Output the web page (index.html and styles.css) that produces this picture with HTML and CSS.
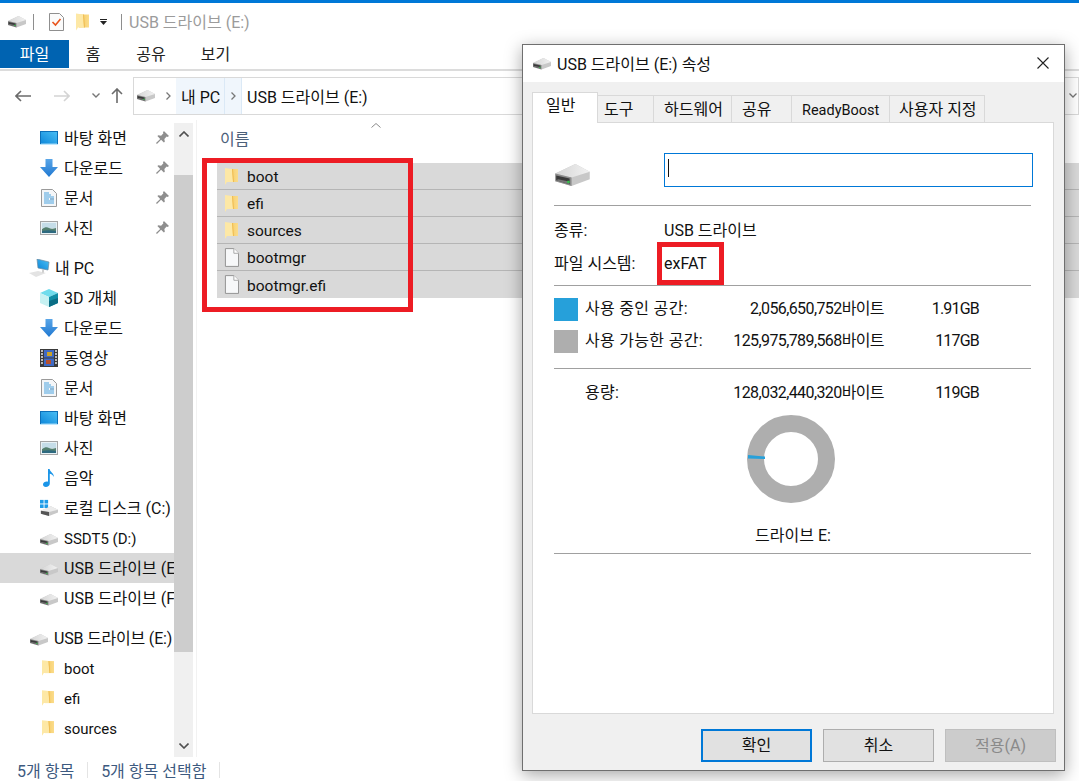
FILE: index.html
```html
<!DOCTYPE html>
<html lang="ko">
<head>
  <meta charset="utf-8">
  <title>USB 드라이브 (E:)</title>
  <link rel="stylesheet" href="styles.css">
</head>
<body>
  <svg class="icon-defs" width="0" height="0">
    <defs>
      <linearGradient id="driveTop" x1="0" y1="0" x2="1" y2="0">
        <stop offset="0" stop-color="#d4d4d4"/><stop offset="1" stop-color="#f2f2f2"/>
      </linearGradient>
      <linearGradient id="folderFill" x1="0" y1="0" x2="1" y2="0">
        <stop offset="0" stop-color="#f4c75e"/><stop offset="1" stop-color="#fbdc8a"/>
      </linearGradient>
      <linearGradient id="screenFill" x1="0" y1="1" x2="1" y2="0">
        <stop offset="0" stop-color="#0a84d8"/><stop offset="1" stop-color="#4cc0f5"/>
      </linearGradient>
      <linearGradient id="arrowFill" x1="0" y1="0" x2="0" y2="1">
        <stop offset="0" stop-color="#5aa6e8"/><stop offset="1" stop-color="#1f78d1"/>
      </linearGradient>
      <symbol id="i-drive" viewBox="0 0 36 24">
        <polygon points="0,10 21,0 36,8 36,16 17,23 0,18" fill="#c8c8c8"/>
        <polygon points="0,10 21,0 36,8 17,14" fill="url(#driveTop)"/>
        <polygon points="0,10 17,14 17,23 0,18" fill="#8c8c8c"/>
        <polygon points="1,12 15,15 15,21 1,17" fill="#3a3a3a"/>
        <polygon points="3,16 13,18 15,21 1,17" fill="#777"/>
        <rect x="12.500" y="17.500" width="2.500" height="2.500" fill="#35c24a"/>
      </symbol>
      <symbol id="i-folder" viewBox="0 0 13 17">
        <polygon points="3,1 13,1 13,14 3,14" fill="url(#folderFill)"/>
        <polygon points="0,0 7,1 8,14 2,14 0,17" fill="#fde8a6"/>
        <polygon points="7,1 8,1 9,14 8,14" fill="#f0bd52"/>
      </symbol>
      <symbol id="i-file" viewBox="0 0 16 20">
        <path d="M1.500.500h9l5 5v14h-14z" fill="#f7f8f9" stroke="#8f8f8f"/>
        <path d="M10.500.500v5h5" fill="#fff" stroke="#a5a5a5"/>
      </symbol>
      <symbol id="i-desktop" viewBox="0 0 18 14">
        <rect width="18" height="14" fill="url(#screenFill)"/>
        <rect x="0" y="12.600" width="18" height="1.400" fill="#bfe6fb"/>
        <path d="M0 0h18v1H0zM0 0h1v13H0zM17 0h1v13h-1z" fill="#0d6fb8"/>
      </symbol>
      <symbol id="i-down" viewBox="0 0 18 18">
        <path d="M5.500 0h7v8H18l-9 10L0 8h5.500z" fill="url(#arrowFill)"/>
      </symbol>
      <symbol id="i-doc" viewBox="0 0 16 18">
        <path d="M.5.500h11l4 4v13H.5z" fill="#f4f6f8" stroke="#9a9a9a"/>
        <path d="M3 4h5M3 6h7M3 8h10M3 10h5M3 12h10M3 14h10" stroke="#4aa3df"/>
        <path d="M9 10h4" stroke="#2d7fb8"/>
      </symbol>
      <symbol id="i-picture" viewBox="0 0 18 14">
        <rect x=".5" y=".5" width="17" height="13" fill="#e8f1f5" stroke="#a5a5a5"/>
        <rect x="2" y="2" width="14" height="5" fill="#c5dde8"/>
        <path d="M2 8c3-2 5-2 7-1s4 1 7 0v5H2z" fill="#55806f"/>
        <path d="M2 10c4-1 9-1 14 0v2H2z" fill="#2e6a80"/>
      </symbol>
      <symbol id="i-cube" viewBox="0 0 18 18">
        <polygon points="9,0 18,4 9,8 0,4" fill="#6fdcec"/>
        <polygon points="0,4 9,8 9,18 0,14" fill="#c6f1f2"/>
        <polygon points="18,4 9,8 9,18 18,14" fill="#0f8ea6"/>
        <polygon points="9,12 18,9 18,14 9,18" fill="#0b6d85"/>
      </symbol>
      <symbol id="i-film" viewBox="0 0 18 18">
        <rect width="18" height="18" fill="#3a3a3a"/>
        <rect x="4" y="1" width="10" height="7.500" fill="#3f69c4"/>
        <rect x="4" y="9.500" width="10" height="7.500" fill="#3f69c4"/>
        <rect x="7" y="3" width="5" height="4" fill="#c9a227"/>
        <rect x="6" y="11" width="5" height="4" fill="#b5502e"/>
        <path d="M1 2h2M1 5h2M1 8h2M1 11h2M1 14h2M15 2h2M15 5h2M15 8h2M15 11h2M15 14h2" stroke="#e5e5e5" stroke-width="1.400"/>
      </symbol>
      <symbol id="i-music" viewBox="0 0 12 18">
        <path d="M5 0h1.600c.4 3 4.400 4 4.400 8-1-2-2.700-3-4.200-3.200V14.500C6.800 16.800 4.800 18 2.800 18 1.200 18 0 17 0 15.600 0 13.800 2 12.500 3.800 12.500c.4 0 .8 0 1.200.2z" fill="#1b95e8"/>
      </symbol>
      <symbol id="i-cdrive" viewBox="0 0 20 18">
        <rect x="0" y="0" width="4" height="4" fill="#1e9ce8"/><rect x="5" y="0" width="4" height="4" fill="#1e9ce8"/>
        <rect x="0" y="5" width="4" height="4" fill="#1e9ce8"/><rect x="5" y="5" width="4" height="4" fill="#1e9ce8"/>
        <polygon points="1,12 12,7 20,11 20,14 10,18 1,15.500" fill="#c8c8c8"/>
        <polygon points="1,12 12,7 20,11 10,13.500" fill="#ececec"/>
        <polygon points="1,12 10,13.500 10,18 1,15.500" fill="#555"/>
      </symbol>
      <symbol id="i-pc" viewBox="0 0 21 18">
        <polygon points="8,0 20,3 19,11 9,9" fill="url(#screenFill)"/>
        <path d="M8 0l12 3-1 8-10-2z" fill="none" stroke="#6a8aa0" stroke-width=".7"/>
        <polygon points="0,14 9,12 17,14 7,18" fill="#e3e3e3"/>
        <path d="M14 10.500v3" stroke="#a0a0a0"/>
      </symbol>
      <symbol id="i-pin" viewBox="0 0 14 14">
        <path d="M8.500 0L14 5.500l-1.500 1-1-.5-2.500 2.500.5 3-1 1-3-3L1 14l-1-1 4.500-4.500-3-3 1-1 3 .5L8 2.500l-.5-1z" fill="#8e8e8e"/>
      </symbol>
      <symbol id="i-check" viewBox="0 0 15 18">
        <path d="M.5.500h10l4 4v13H.5z" fill="#fbfbfb" stroke="#8f8f8f"/>
        <path d="M3.500 9l3 3 5-6" fill="none" stroke="#e8541c" stroke-width="1.600"/>
      </symbol>
    </defs>
  </svg>

  <div class="explorer">
    <div class="top-line"></div>
    <div class="title-row">
      <svg class="ico-drive-sm"><use href="#i-drive"/></svg>
      <span class="title-sep"></span>
      <svg class="ico-check"><use href="#i-check"/></svg>
      <svg class="ico-folder-title"><use href="#i-folder"/></svg>
      <svg class="ico-qat" viewBox="0 0 8 6"><path d="M0 0h7v1H0zM0 2h7L3.500 6z" fill="#222"/></svg>
      <span class="title-sep title-sep-2"></span>
      <span class="title-text">USB 드라이브 (E:)</span>
    </div>

    <div class="ribbon">
      <div class="ribbon-tab file-tab">파일</div>
      <div class="ribbon-tab home-tab">홈</div>
      <div class="ribbon-tab share-tab">공유</div>
      <div class="ribbon-tab view-tab">보기</div>
    </div>

    <div class="address-row">
      <svg class="nav-arrow" viewBox="0 0 16 12"><path d="M6 1L1 6l5 5M1 6h15" fill="none" stroke="#6b6b6b" stroke-width="1.600"/></svg>
      <svg class="nav-arrow nav-fwd" viewBox="0 0 16 12"><path d="M10 1l5 5-5 5M15 6H0" fill="none" stroke="#d4d4d4" stroke-width="1.600"/></svg>
      <svg class="nav-drop" viewBox="0 0 8 5"><path d="M.5.500L4 4 7.500.500" fill="none" stroke="#777" stroke-width="1.400"/></svg>
      <svg class="nav-up" viewBox="0 0 12 15"><path d="M1 6l5-5 5 5M6 1v14" fill="none" stroke="#6b6b6b" stroke-width="1.600"/></svg>
      <div class="address-box">
        <svg class="ico-drive-sm ico-addr"><use href="#i-drive"/></svg>
        <svg class="crumb-sep" viewBox="0 0 5 8"><path d="M.5.500L4 4 .5 7.500" fill="none" stroke="#777" stroke-width="1.300"/></svg>
        <div class="crumb-hover">
          <span class="crumb-pc">내 PC</span>
          <span class="crumb-arrow"><svg class="crumb-sep crumb-sep-in" viewBox="0 0 5 8"><path d="M.5.500L4 4 .5 7.500" fill="none" stroke="#777" stroke-width="1.300"/></svg></span>
        </div>
        <span class="crumb-usb">USB 드라이브 (E:)</span>
        <svg class="addr-end" viewBox="0 0 8 5"><path d="M.5.500L4 4 7.500.500" fill="none" stroke="#777" stroke-width="1.300"/></svg>
      </div>
    </div>

    <div class="main">
      <div class="sidebar">
        <div class="nav-list">
          <div class="nav-item"><svg class="ni ni-wide"><use href="#i-desktop"/></svg><span>바탕 화면</span><svg class="pin"><use href="#i-pin"/></svg></div>
          <div class="nav-item"><svg class="ni"><use href="#i-down"/></svg><span>다운로드</span><svg class="pin"><use href="#i-pin"/></svg></div>
          <div class="nav-item"><svg class="ni"><use href="#i-doc"/></svg><span>문서</span><svg class="pin"><use href="#i-pin"/></svg></div>
          <div class="nav-item"><svg class="ni ni-wide"><use href="#i-picture"/></svg><span>사진</span><svg class="pin"><use href="#i-pin"/></svg></div>

          <div class="nav-item nav-top nav-gap"><svg class="ni ni-pc"><use href="#i-pc"/></svg><span>내 PC</span></div>
          <div class="nav-item"><svg class="ni"><use href="#i-cube"/></svg><span>3D 개체</span></div>
          <div class="nav-item"><svg class="ni"><use href="#i-down"/></svg><span>다운로드</span></div>
          <div class="nav-item"><svg class="ni"><use href="#i-film"/></svg><span>동영상</span></div>
          <div class="nav-item"><svg class="ni"><use href="#i-doc"/></svg><span>문서</span></div>
          <div class="nav-item"><svg class="ni ni-wide"><use href="#i-desktop"/></svg><span>바탕 화면</span></div>
          <div class="nav-item"><svg class="ni ni-wide"><use href="#i-picture"/></svg><span>사진</span></div>
          <div class="nav-item"><svg class="ni"><use href="#i-music"/></svg><span>음악</span></div>
          <div class="nav-item"><svg class="ni"><use href="#i-cdrive"/></svg><span>로컬 디스크 (C:)</span></div>
          <div class="nav-item nav-latin"><svg class="ni ni-drive"><use href="#i-drive"/></svg><span>SSDT5 (D:)</span></div>
          <div class="nav-item selected"><svg class="ni ni-drive"><use href="#i-drive"/></svg><span>USB 드라이브 (E:)</span></div>
          <div class="nav-item"><svg class="ni ni-drive"><use href="#i-drive"/></svg><span>USB 드라이브 (F:)</span></div>

          <div class="nav-item nav-top nav-gap nav-tight"><svg class="ni ni-drive"><use href="#i-drive"/></svg><span>USB 드라이브 (E:)</span></div>
          <div class="nav-item nav-latin"><svg class="ni ni-folder"><use href="#i-folder"/></svg><span>boot</span></div>
          <div class="nav-item nav-latin"><svg class="ni ni-folder"><use href="#i-folder"/></svg><span>efi</span></div>
          <div class="nav-item nav-latin"><svg class="ni ni-folder"><use href="#i-folder"/></svg><span>sources</span></div>
        </div>
        <div class="scrollbar">
          <svg class="scroll-btn" viewBox="0 0 10 6"><path d="M.5 5.500L5 1l4.500 4.500" fill="none" stroke="#505050" stroke-width="1.600"/></svg>
          <div class="scroll-thumb"></div>
          <svg class="scroll-btn scroll-btn-down" viewBox="0 0 10 6"><path d="M.5.500L5 5 9.500.500" fill="none" stroke="#505050" stroke-width="1.600"/></svg>
        </div>
      </div>

      <div class="file-pane">
        <svg class="sort-caret" viewBox="0 0 10 5"><path d="M.5 4.500L5 .5l4.500 4" fill="none" stroke="#8a8a8a"/></svg>
        <div class="col-head">이름</div>
        <div class="file-list">
          <div class="file-row"><svg class="fi fi-folder"><use href="#i-folder"/></svg><span>boot</span></div>
          <div class="file-row"><svg class="fi fi-folder"><use href="#i-folder"/></svg><span>efi</span></div>
          <div class="file-row"><svg class="fi fi-folder"><use href="#i-folder"/></svg><span>sources</span></div>
          <div class="file-row"><svg class="fi"><use href="#i-file"/></svg><span>bootmgr</span></div>
          <div class="file-row"><svg class="fi"><use href="#i-file"/></svg><span>bootmgr.efi</span></div>
        </div>
        <div class="red-box files-mark"></div>
      </div>
    </div>

    <div class="status-bar">
      <span class="status-count">5개 항목</span>
      <span class="status-sep"></span>
      <span class="status-sel">5개 항목 선택함</span>
      <span class="status-sep"></span>
    </div>
  </div>

  <div class="dialog">
    <div class="dialog-title">
      <svg class="ico-drive-sm"><use href="#i-drive"/></svg>
      <span class="dialog-title-text">USB 드라이브 (E:) 속성</span>
      <svg class="close-x" viewBox="0 0 12 12"><path d="M.5.500l11 11M11.500.500l-11 11" stroke="#222" stroke-width="1.100"/></svg>
    </div>

    <div class="tabs">
      <div class="tab active tab-general">일반</div>
      <div class="tab tab-tools">도구</div>
      <div class="tab tab-hw">하드웨어</div>
      <div class="tab tab-share">공유</div>
      <div class="tab tab-ready">ReadyBoost</div>
      <div class="tab tab-custom">사용자 지정</div>
    </div>

    <div class="panel">
      <div class="name-row">
        <svg class="big-drive"><use href="#i-drive"/></svg>
        <div class="name-input"><span class="caret"></span></div>
      </div>
      <hr class="sep">

      <div class="info">
        <div class="info-row"><span class="info-label">종류:</span><span>USB 드라이브</span></div>
        <div class="info-row"><span class="info-label">파일 시스템:</span><span>exFAT</span></div>
        <div class="red-box fs-mark"></div>
      </div>
      <hr class="sep">

      <div class="usage">
        <div class="usage-row">
          <span class="swatch used"></span><span class="usage-label">사용 중인 공간:</span>
          <span class="usage-bytes">2,056,650,752바이트</span><span class="usage-size">1.91GB</span>
        </div>
        <div class="usage-row">
          <span class="swatch free"></span><span class="usage-label">사용 가능한 공간:</span>
          <span class="usage-bytes">125,975,789,568바이트</span><span class="usage-size">117GB</span>
        </div>
      </div>
      <hr class="sep">

      <div class="usage-row capacity">
        <span class="swatch none"></span><span class="usage-label">용량:</span>
        <span class="usage-bytes">128,032,440,320바이트</span><span class="usage-size">119GB</span>
      </div>
      <svg class="donut" viewBox="0 0 88 88">
        <circle cx="44" cy="44" r="35.500" fill="none" stroke="#aeaeae" stroke-width="17"/>
        <polygon points="1,40 18,41.500 18,44 1,43.500" fill="#26a0da"/>
      </svg>
      <div class="drive-label">드라이브 E:</div>
      <hr class="sep">
    </div>

    <div class="dialog-footer">
      <div class="btn btn-default">확인</div>
      <div class="btn">취소</div>
      <div class="btn btn-disabled">적용(A)</div>
    </div>
  </div>
</body>
</html>
```

FILE: styles.css
```css
* {
  box-sizing: border-box;
}

html, body {
  margin: 0;
  height: 781px;
  overflow: hidden;
  background: white;
}

body {
  font-family: Roboto, "Noto Sans CJK KR", sans-serif;
  font-size: 16px;
  color: #111;
}

svg {
  display: block;
  flex: none;
}

.icon-defs {
  position: absolute;
}

.explorer {
  display: flex;
  flex-direction: column;
  height: 781px;
}

.top-line {
  height: 3px;
  background: #0078d7;
}

.title-row {
  height: 37px;
  display: flex;
  align-items: center;
  padding-left: 8px;
}

.ico-drive-sm {
  width: 18px;
  height: 12px;
}

.title-sep {
  width: 1px;
  height: 16px;
  margin-left: 7px;
  background: #8e8e8e;
}

.title-sep-2 {
  margin-left: 13px;
}

.ico-check {
  width: 15px;
  height: 18px;
  margin-left: 15px;
}

.ico-folder-title {
  width: 13px;
  height: 18px;
  margin-left: 12px;
}

.ico-qat {
  width: 8px;
  height: 6px;
  margin-left: 11px;
}

.title-text {
  margin-left: 7px;
  color: #9b9b9b;
  position: relative;
  top: -1px;
}

.ribbon {
  height: 31px;
  display: flex;
  border-bottom: 2px solid #dcdcdc;
}

.ribbon-tab {
  height: 28px;
  line-height: 30px;
  text-align: center;
  color: #222;
}

.file-tab {
  width: 69px;
  background: #0063b1;
  color: white;
}

.home-tab {
  width: 48px;
}

.share-tab {
  width: 68px;
}

.view-tab {
  width: 61px;
}

.address-row {
  height: 49px;
  display: flex;
  align-items: center;
  padding-left: 15px;
}

.nav-arrow {
  width: 16px;
  height: 12px;
}

.nav-fwd {
  margin-left: 23px;
}

.nav-drop {
  width: 8px;
  height: 5px;
  margin-left: 22px;
}

.nav-up {
  width: 12px;
  height: 15px;
  margin-left: 11px;
}

.address-box {
  margin-left: 10px;
  flex: 1;
  height: 38px;
  border: 1px solid #d9d9d9;
  display: flex;
  align-items: center;
  padding-left: 3px;
  position: relative;
}

.crumb-sep {
  width: 5px;
  height: 8px;
  margin-left: 11px;
}

.crumb-sep-in {
  margin-left: 0;
}

.crumb-hover {
  margin-left: 5px;
  height: 36px;
  width: 66px;
  display: flex;
  align-items: center;
  background: #f0f6fc;
}

.crumb-pc {
  width: 48px;
  padding-left: 5px;
  white-space: nowrap;
}

.crumb-arrow {
  width: 18px;
  height: 36px;
  display: flex;
  align-items: center;
  justify-content: center;
  border-left: 1px solid #dbe9f6;
  border-right: 1px solid #dbe9f6;
}

.crumb-usb {
  margin-left: 5px;
  white-space: nowrap;
}

.addr-end {
  width: 8px;
  height: 5px;
  margin-left: auto;
  margin-right: 1px;
}

.main {
  flex: 1;
  display: flex;
  min-height: 0;
}

.sidebar {
  width: 194px;
  display: flex;
  padding-top: 3px;
  flex: none;
}

.nav-list {
  width: 174px;
  overflow: hidden;
  flex: none;
}

.nav-item {
  height: 30px;
  display: flex;
  align-items: center;
  padding-left: 40px;
  white-space: nowrap;
  position: relative;
}

.nav-item span {
  position: relative;
  top: -1px;
}

.nav-item.selected {
  background: #d9d9d9;
}

.nav-latin {
  font-size: 15px;
}

.nav-latin span {
  top: 1px;
}

.nav-tight {
  letter-spacing: -0.2px;
}

.nav-top {
  padding-left: 30px;
}

.nav-gap {
  margin-top: 10px;
}

.ni {
  width: 18px;
  height: 18px;
  margin-right: 6px;
}

.ni-wide {
  height: 14px;
}

.ni-pc {
  width: 21px;
  margin-left: -1px;
  margin-right: 5px;
}

.ni-drive {
  height: 12px;
  margin-top: 3px;
}

.ni-folder {
  width: 12px;
  height: 16px;
  margin-left: 2px;
  margin-right: 10px;
}

.pin {
  position: absolute;
  left: 156px;
  top: 8px;
  width: 13px;
  height: 13px;
}

.scrollbar {
  width: 19px;
  height: 634px;
  background: #f0f0f0;
  display: flex;
  flex-direction: column;
  align-items: center;
}

.scroll-btn {
  width: 10px;
  height: 6px;
  margin: 8px 0 38px;
}

.scroll-btn-down {
  margin: 91px 0 0;
}

.scroll-thumb {
  width: 19px;
  height: 477px;
  background: #cdcdcd;
}

.file-pane {
  flex: 1;
  position: relative;
  border-left: 1px solid #f2f2f2;
  margin-left: 2px;
}

.sort-caret {
  position: absolute;
  left: 174px;
  top: 3px;
  width: 10px;
  height: 5px;
}

.col-head {
  padding: 6px 0 0 23px;
  height: 43px;
  color: #4c607a;
}

.file-list {
  margin-left: 20px;
}

.file-row {
  height: 27px;
  display: flex;
  align-items: center;
  background: #d9d9d9;
  border-bottom: 1px solid #b5b5b5;
  padding-left: 7px;
  font-size: 15.500px;
}

.file-row span {
  position: relative;
  top: 1px;
}

.file-row:last-child {
  border-bottom: none;
}

.fi {
  width: 15px;
  height: 19px;
  margin-right: 8px;
}

.fi-folder {
  height: 17px;
}

.red-box {
  position: absolute;
  border: 5px solid #ed1c24;
}

.files-mark {
  left: 5px;
  top: 38px;
  width: 211px;
  height: 154px;
}

.status-bar {
  height: 24px;
  display: flex;
  align-items: center;
  padding: 1px 0 0 17px;
  color: #3d5a80;
}

.status-sep {
  width: 1px;
  height: 16px;
  background: #e4e4e4;
  margin: 0 13px;
}

/* properties window */
.dialog {
  position: absolute;
  left: 522px;
  top: 44px;
  width: 543px;
  height: 727px;
  background: #f0f0f0;
  border: 1px solid #6f6f6f;
  box-shadow: 0 4px 16px rgba(0,0,0,0.35);
  display: flex;
  flex-direction: column;
}

.dialog-title {
  height: 37px;
  flex: none;
  background: white;
  display: flex;
  align-items: center;
  padding-left: 10px;
  position: relative;
}

.dialog-title-text {
  margin-left: 6px;
  position: relative;
  top: -1px;
}

.close-x {
  position: absolute;
  right: 15px;
  top: 12px;
  width: 12px;
  height: 12px;
}

.tabs {
  height: 40px;
  flex: none;
  display: flex;
  align-items: flex-end;
  padding-left: 9px;
}

.tab {
  height: 27px;
  line-height: 27px;
  border: 1px solid #d9d9d9;
  border-bottom: none;
  border-left: none;
  padding-left: 6px;
  white-space: nowrap;
}

.tab.active {
  height: 31px;
  line-height: 26px;
  background: white;
  border-left: 1px solid #d9d9d9;
  margin-bottom: -1px;
  position: relative;
  z-index: 1;
  padding-left: 13px;
}

.tab-general { width: 66px; }
.tab-tools { width: 56px; }
.tab-hw { width: 78px; padding-left: 10px; }
.tab-share { width: 60px; padding-left: 10px; }
.tab-ready { width: 98px; padding-left: 10px; font-size: 14.500px; line-height: 30px; }
.tab-custom { width: 95px; padding-left: 9px; }

.panel {
  margin-left: 9px;
  margin-right: 10px;
  flex: 1;
  background: white;
  border: 1px solid #d9d9d9;
  padding: 30px 20px 0 21px;
}

.name-row {
  display: flex;
  align-items: center;
  height: 34px;
}

.big-drive {
  width: 37px;
  height: 23px;
  margin-top: 10px;
}

.name-input {
  margin-left: 73px;
  flex: 1;
  height: 34px;
  border: 1px solid #0078d7;
  padding: 5px 3px;
  background: white;
}

.caret {
  display: block;
  width: 1px;
  height: 18px;
  background: #111;
}

.sep {
  border: none;
  border-top: 1px solid #a0a0a0;
  margin: 0 2px 0 0;
}

.name-row + .sep {
  margin-top: 18px;
}

.info {
  padding: 7px 0 6px;
  position: relative;
}

.info-row {
  height: 33px;
  line-height: 35px;
  display: flex;
  align-items: baseline;
}

.info-label {
  width: 110px;
}

.fs-mark {
  left: 103px;
  top: 36px;
  width: 67px;
  height: 43px;
}

.usage {
  padding: 12px 0 15px;
  display: flex;
  flex-direction: column;
  gap: 9px;
}

.usage-row {
  height: 23px;
  line-height: 21px;
  display: flex;
  align-items: baseline;
  white-space: nowrap;
}

.swatch {
  width: 24px;
  height: 23px;
  margin-right: 7px;
  flex: none;
  align-self: center;
}

.swatch.used {
  background: #26a0da;
}

.swatch.free {
  background: #aeaeae;
}

.usage-label {
  width: 130px;
  letter-spacing: 0.3px;
}

.usage-bytes {
  width: 169px;
  text-align: right;
  letter-spacing: -0.6px;
}

.usage-size {
  width: 95px;
  text-align: right;
  letter-spacing: -0.8px;
}

.capacity {
  margin-top: 13px;
}

.donut {
  width: 88px;
  height: 88px;
  margin: 10px 0 0 193px;
}

.drive-label {
  margin-top: 22px;
  height: 22px;
  line-height: 22px;
  width: 478px;
  text-align: center;
}

.drive-label + .sep {
  margin-top: 6px;
}

.dialog-footer {
  height: 56px;
  flex: none;
  display: flex;
  justify-content: flex-end;
  gap: 11px;
  padding: 15px 8px 0 0;
}

.btn {
  width: 111px;
  height: 33px;
  line-height: 31px;
  text-align: center;
  background: #e1e1e1;
  border: 1px solid #adadad;
}

.btn-default {
  border: 2px solid #0078d7;
  line-height: 29px;
}

.btn-disabled {
  background: #cccccc;
  border-color: #bfbfbf;
  color: #8a8a8a;
}
```
